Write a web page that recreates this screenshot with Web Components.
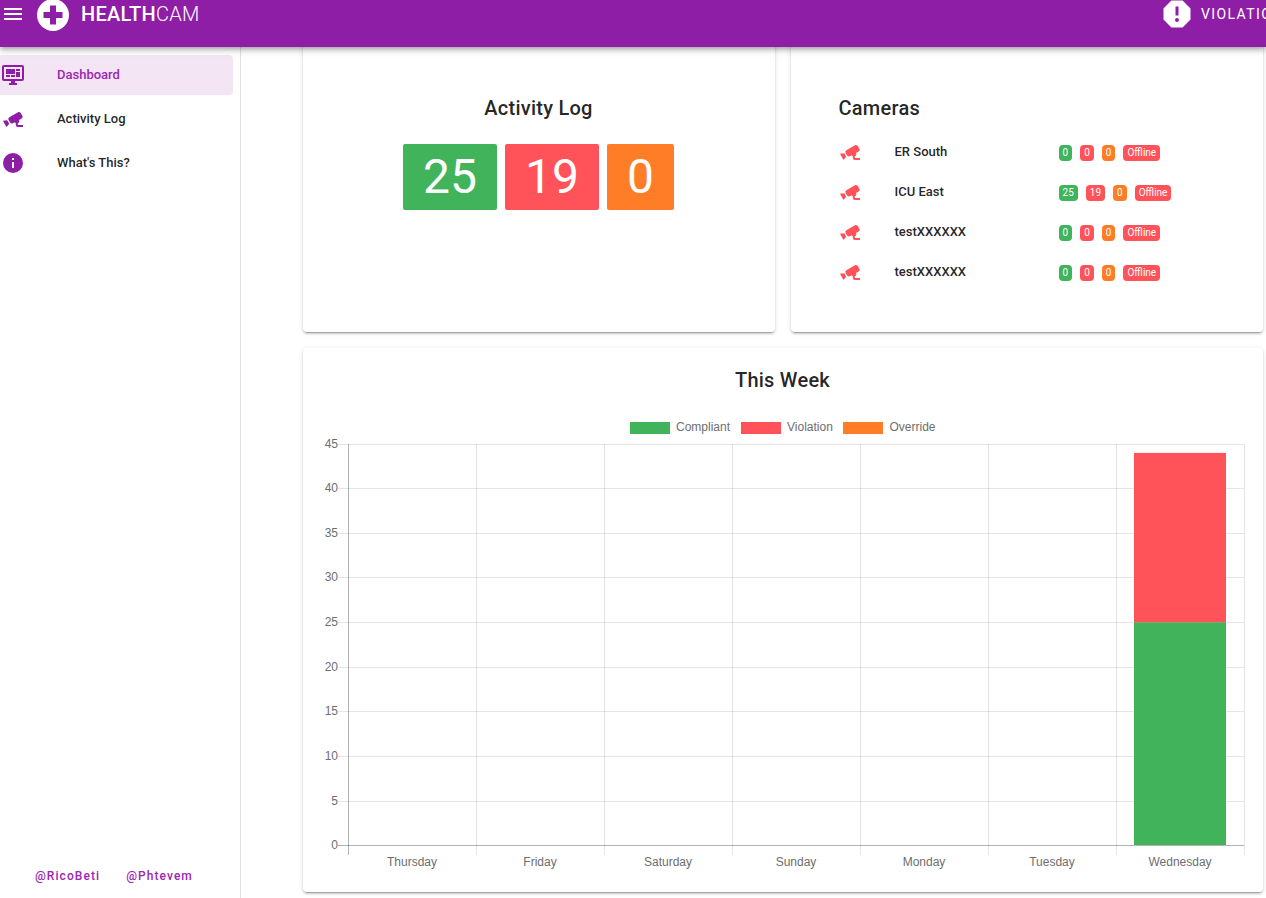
<!DOCTYPE html>
<html lang="en">
<head>
<meta charset="utf-8">
<title>HealthCam</title>
<style>
    html, body { margin: 0; height: 100%; overflow: hidden; background: #fff; }
    body { font-family: Roboto, "Liberation Sans", sans-serif; color: rgba(0,0,0,0.87); }
</style>
</head>
<body>
<hc-app>
    <hc-appbar slot="bar"></hc-appbar>
    <hc-sidenav slot="nav">
        <hc-navitem icon="dashboard" active>Dashboard</hc-navitem>
        <hc-navitem icon="cctv">Activity Log</hc-navitem>
        <hc-navitem icon="info">What's This?</hc-navitem>
        <span slot="footer">@RicoBeti</span>
        <span slot="footer">@Phtevem</span>
    </hc-sidenav>

    <hc-card style="height:305px;margin-top:-20px">
        <h2>Activity Log</h2>
        <div style="display:flex;justify-content:center;gap:8px;padding-right:1px">
            <hc-tile tone="green">25</hc-tile>
            <hc-tile tone="red">19</hc-tile>
            <hc-tile tone="orange">0</hc-tile>
        </div>
    </hc-card>
    <hc-card style="height:305px;margin-top:-20px" align="left">
        <h2>Cameras</h2>
        <hc-camera name="ER South" counts="0,0,0"></hc-camera>
        <hc-camera name="ICU East" counts="25,19,0"></hc-camera>
        <hc-camera name="testXXXXXX" counts="0,0,0"></hc-camera>
        <hc-camera name="testXXXXXX" counts="0,0,0"></hc-camera>
    </hc-card>
    <hc-card style="grid-column:1 / 3;height:544px" kind="chart">
        <h2>This Week</h2>
        <hc-weekchart></hc-weekchart>
    </hc-card>
</hc-app>

<script>
const ICONS = {
    menu: 'M3,6H21V8H3V6M3,11H21V13H3V11M3,16H21V18H3V16Z',
    alert: 'M13,13H11V7H13M12,17.3A1.3,1.3 0 0,1 10.7,16A1.3,1.3 0 0,1 12,14.7A1.3,1.3 0 0,1 13.3,16A1.3,1.3 0 0,1 12,17.3M15.73,3H8.27L3,8.27V15.73L8.27,21H15.73L21,15.73V8.27L15.73,3Z',
    dashboard: 'M21,16V4H3V16H21M21,2A2,2 0 0,1 23,4V16A2,2 0 0,1 21,18H14V20H16V22H8V20H10V18H3C1.89,18 1,17.1 1,16V4C1,2.89 1.89,2 3,2H21M5,6H14V11H5V6M15,6H19V8H15V6M19,9V14H15V9H19M5,12H9V14H5V12M10,12H14V14H10V12Z',
    cctv: 'M18.15,4.94C17.77,4.91 17.37,5 17,5.2L8.35,10.2C7.39,10.76 7.06,12 7.62,12.94L9.12,15.53C9.67,16.5 10.89,16.82 11.85,16.27L13.65,15.23C13.92,15.69 14.32,16.06 14.81,16.27V18.04C14.81,19.13 15.7,20 16.81,20H22V18.04H16.81V16.27C17.72,15.87 18.31,14.96 18.31,13.96C18.31,13.6 18.24,13.25 18.09,12.92L20.63,11.46C21.59,10.9 21.92,9.68 21.37,8.72L19.87,6.13C19.5,5.5 18.86,5 18.15,4.94M6.22,13.17L2,13.87L2.75,15.17L4.75,18.63L5.5,19.93L8.22,16.63L6.22,13.17Z',
    info: 'M13,9H11V7H13M13,17H11V11H13M12,2A10,10 0 0,0 2,12A10,10 0 0,0 12,22A10,10 0 0,0 22,12A10,10 0 0,0 12,2Z'
};
const PURPLE = '#8e1ea5';
const TONES = { green: '#40b35b', red: '#ff5359', orange: '#ff7d27' };

class HCIcon extends HTMLElement {
    connectedCallback() {
        const size = this.getAttribute('size') || 24;
        this.attachShadow({ mode: 'open' }).innerHTML = `
            <style>:host { display: block; width: ${size}px; height: ${size}px; flex: none; } svg { display: block; }</style>
            <svg width="${size}" height="${size}" viewBox="0 0 24 24" fill="currentColor"><path d="${ICONS[this.getAttribute('name')]}"/></svg>`;
    }
}

class HCApp extends HTMLElement {
    constructor() {
        super();
        this.attachShadow({ mode: 'open' }).innerHTML = `
            <style>
                :host { display: flex; flex-direction: column; height: 898px; overflow: hidden; }
                .body { flex: 1; min-height: 0; display: flex; }
                main {
                    flex: 1;
                    display: grid;
                    grid-template-columns: 472px 472px;
                    grid-auto-rows: min-content;
                    gap: 16px;
                    padding: 0 3px 0 62px;
                }
            </style>
            <slot name="bar"></slot>
            <div class="body">
                <slot name="nav"></slot>
                <main><slot></slot></main>
            </div>`;
    }
}

class HCAppbar extends HTMLElement {
    constructor() {
        super();
        this.attachShadow({ mode: 'open' }).innerHTML = `
            <style>
                :host {
                    display: block;
                    height: 47px;
                    background: ${PURPLE};
                    color: #fff;
                    position: relative;
                    z-index: 2;
                    box-shadow: 0 2px 4px -1px rgba(0,0,0,.2), 0 4px 5px 0 rgba(0,0,0,.14), 0 1px 10px 0 rgba(0,0,0,.12);
                }
                .clip { height: 47px; overflow: hidden; }
                .row { height: 28px; display: flex; align-items: center; }
                .left { flex: 0 0 1159px; display: flex; align-items: center; padding-left: 1px; box-sizing: border-box; }
                .logo { margin-left: 12px; display: block; flex: none; }
                .brand { margin-left: 12px; font-size: 20px; font-weight: 500; letter-spacing: .25px; white-space: nowrap; }
                .brand span { font-weight: 300; }
                .right { display: flex; align-items: center; flex: none; }
                .label { margin-left: 6px; font-size: 14px; font-weight: 400; letter-spacing: 1.4px; white-space: nowrap; }
            </style>
            <div class="clip">
                <div class="row">
                    <div class="left">
                        <hc-icon name="menu"></hc-icon>
                        <svg class="logo" width="32" height="34" viewBox="0 0 32 34" style="margin-top:1px">
                            <circle cx="16" cy="17" r="16" fill="#fff"/>
                            <path d="M13,7.5H19V14H25.5V20H19V26.500H13V20H6.500V14H13Z" fill="${PURPLE}"/>
                        </svg>
                        <div class="brand">HEALTH<span>CAM</span></div>
                    </div>
                    <div class="right">
                        <hc-icon name="alert" size="36"></hc-icon>
                        <div class="label">VIOLATIONS</div>
                    </div>
                </div>
            </div>`;
    }
}

class HCSidenav extends HTMLElement {
    constructor() {
        super();
        this.attachShadow({ mode: 'open' }).innerHTML = `
            <style>
                :host {
                    display: flex;
                    flex-direction: column;
                    width: 241px;
                    flex: none;
                    box-sizing: border-box;
                    border-right: 1px solid rgba(0,0,0,.12);
                    padding: 8px 7px 15px 0;
                }
                .items { display: flex; flex-direction: column; gap: 4px; }
                .footer {
                    margin-top: auto;
                    display: flex;
                    gap: 26px;
                    padding-left: 35px;
                    font-size: 12px;
                    font-weight: 500;
                    letter-spacing: 1.07px;
                    color: #9c27b0;
                }
            </style>
            <div class="items"><slot></slot></div>
            <div class="footer"><slot name="footer"></slot></div>`;
    }
}

class HCNavitem extends HTMLElement {
    connectedCallback() {
        const on = this.hasAttribute('active');
        this.attachShadow({ mode: 'open' }).innerHTML = `
            <style>
                :host {
                    display: flex;
                    align-items: center;
                    height: 40px;
                    border-radius: 0 4px 4px 0;
                    font-size: 13px;
                    font-weight: 500;
                    background: ${on ? '#f3e5f4' : 'transparent'};
                    color: ${on ? '#9c27b0' : 'rgba(0,0,0,.87)'};
                }
                hc-icon { color: ${PURPLE}; margin: 0 32px 0 1px; }
                span { margin-top: -2px; }
            </style>
            <hc-icon name="${this.getAttribute('icon')}"></hc-icon>
            <span><slot></slot></span>`;
    }
}

class HCCard extends HTMLElement {
    constructor() {
        super();
        this.attachShadow({ mode: 'open' }).innerHTML = `
            <style>
                :host {
                    display: block;
                    box-sizing: border-box;
                    background: #fff;
                    border-radius: 4px;
                    box-shadow: 0 3px 1px -2px rgba(0,0,0,.2), 0 2px 2px 0 rgba(0,0,0,.14), 0 1px 5px 0 rgba(0,0,0,.12);
                    padding-top: 65px;
                    min-width: 0;
                }
                :host([align="left"]) { padding-left: 47.5px; padding-right: 16px; }
                :host([kind="chart"]) { padding-top: 16px; }
                ::slotted(h2) {
                    margin: 0 0 20px;
                    padding-right: 1px;
                    font: 500 20px/32px Roboto, "Liberation Sans", sans-serif;
                    letter-spacing: .25px;
                    text-align: center;
                }
                :host([kind="chart"]) ::slotted(h2) { margin-bottom: 4px; }
                :host([align="left"]) ::slotted(h2) { text-align: left; margin-bottom: 9px; }
            </style>
            <slot></slot>`;
    }
}

class HCTile extends HTMLElement {
    connectedCallback() {
        this.attachShadow({ mode: 'open' }).innerHTML = `
            <style>
                :host {
                    display: block;
                    padding: 0 20px;
                    height: 66px;
                    font-size: 48px;
                    font-weight: 400;
                    line-height: 66px;
                    color: #fff;
                    border-radius: 2px;
                    background: ${TONES[this.getAttribute('tone')]};
                }
            </style>
            <slot></slot>`;
    }
}

class HCChip extends HTMLElement {
    connectedCallback() {
        this.attachShadow({ mode: 'open' }).innerHTML = `
            <style>
                :host {
                    display: block;
                    padding: 0 4px;
                    height: 16px;
                    font-size: 10px;
                    line-height: 16px;
                    color: #fff;
                    border-radius: 4px;
                    background: ${TONES[this.getAttribute('tone')]};
                }
            </style>
            <slot></slot>`;
    }
}

class HCCamera extends HTMLElement {
    connectedCallback() {
        const [a, b, c] = this.getAttribute('counts').split(',');
        this.attachShadow({ mode: 'open' }).innerHTML = `
            <style>
                :host { display: flex; align-items: center; height: 40px; }
                hc-icon { color: ${TONES.red}; margin: -2px 0 0 -.5px; }
                .name { width: 164.1px; margin-left: 32.5px; font-size: 13px; font-weight: 500; margin-top: -4px; }
                .chips { display: flex; gap: 8px; }
            </style>
            <hc-icon name="cctv"></hc-icon>
            <div class="name">${this.getAttribute('name')}</div>
            <div class="chips">
                <hc-chip tone="green">${a}</hc-chip>
                <hc-chip tone="red">${b}</hc-chip>
                <hc-chip tone="orange">${c}</hc-chip>
                <hc-chip tone="red">Offline</hc-chip>
            </div>`;
    }
}

// plain svg stand-in for the chart.js canvas, coordinates are relative to the card
class HCWeekchart extends HTMLElement {
    connectedCallback() {
        const x0 = 45, x1 = 941, yTop = 44, yZero = 445, step = 128;
        const unit = (yZero - yTop) / 45;
        const y = v => yZero - v * unit;
        const days = ['Thursday', 'Friday', 'Saturday', 'Sunday', 'Monday', 'Tuesday', 'Wednesday'];
        const grid = 'rgba(0,0,0,.1)';
        const axis = 'rgba(0,0,0,.3)';
        let out = '';

        for (let v = 45; v >= 0; v -= 5) {
            const py = yTop + Math.floor((45 - v) / 5 * 44.65) + .5;
            out += `<line x1="35" x2="${x1}" y1="${py}" y2="${py}" stroke="${v ? grid : axis}"/>`;
            out += `<text x="35" y="${py + 3.500}" text-anchor="end">${v}</text>`;
        }
        days.forEach((d, i) => {
            const px = x0 + i * step + .5;
            out += `<line x1="${px}" x2="${px}" y1="${yTop}" y2="${yZero + 10}" stroke="${i ? grid : axis}"/>`;
            out += `<text x="${px + step / 2 - .5}" y="${yZero + 21}" text-anchor="middle">${d}</text>`;
        });
        out += `<line x1="${x1 + .5}" x2="${x1 + .5}" y1="${yTop}" y2="${yZero + 10}" stroke="${grid}"/>`;

        // only wednesday has data
        out += `<rect x="831" y="${y(25)}" width="92" height="${yZero - y(25)}" fill="${TONES.green}"/>`;
        out += `<rect x="831" y="${y(44)}" width="92" height="${y(25) - y(44)}" fill="${TONES.red}"/>`;

        const legend = [[327, 373, 'Compliant', 'green'], [438, 484, 'Violation', 'red'], [540, 586.5, 'Override', 'orange']];
        legend.forEach(([bx, tx, label, tone]) => {
            out += `<rect x="${bx}" y="22" width="40" height="12" fill="${TONES[tone]}"/>`;
            out += `<text x="${tx}" y="31">${label}</text>`;
        });

        this.attachShadow({ mode: 'open' }).innerHTML = `
            <style>
                :host { display: block; }
                svg { display: block; }
                text { font: 12px "Liberation Sans", Arial, sans-serif; fill: #6e6e6e; }
            </style>
            <svg width="960" height="480" viewBox="0 0 960 480">${out}</svg>`;
    }
}

customElements.define('hc-icon', HCIcon);
customElements.define('hc-app', HCApp);
customElements.define('hc-appbar', HCAppbar);
customElements.define('hc-sidenav', HCSidenav);
customElements.define('hc-navitem', HCNavitem);
customElements.define('hc-card', HCCard);
customElements.define('hc-tile', HCTile);
customElements.define('hc-chip', HCChip);
customElements.define('hc-camera', HCCamera);
customElements.define('hc-weekchart', HCWeekchart);
</script>
</body>
</html>
